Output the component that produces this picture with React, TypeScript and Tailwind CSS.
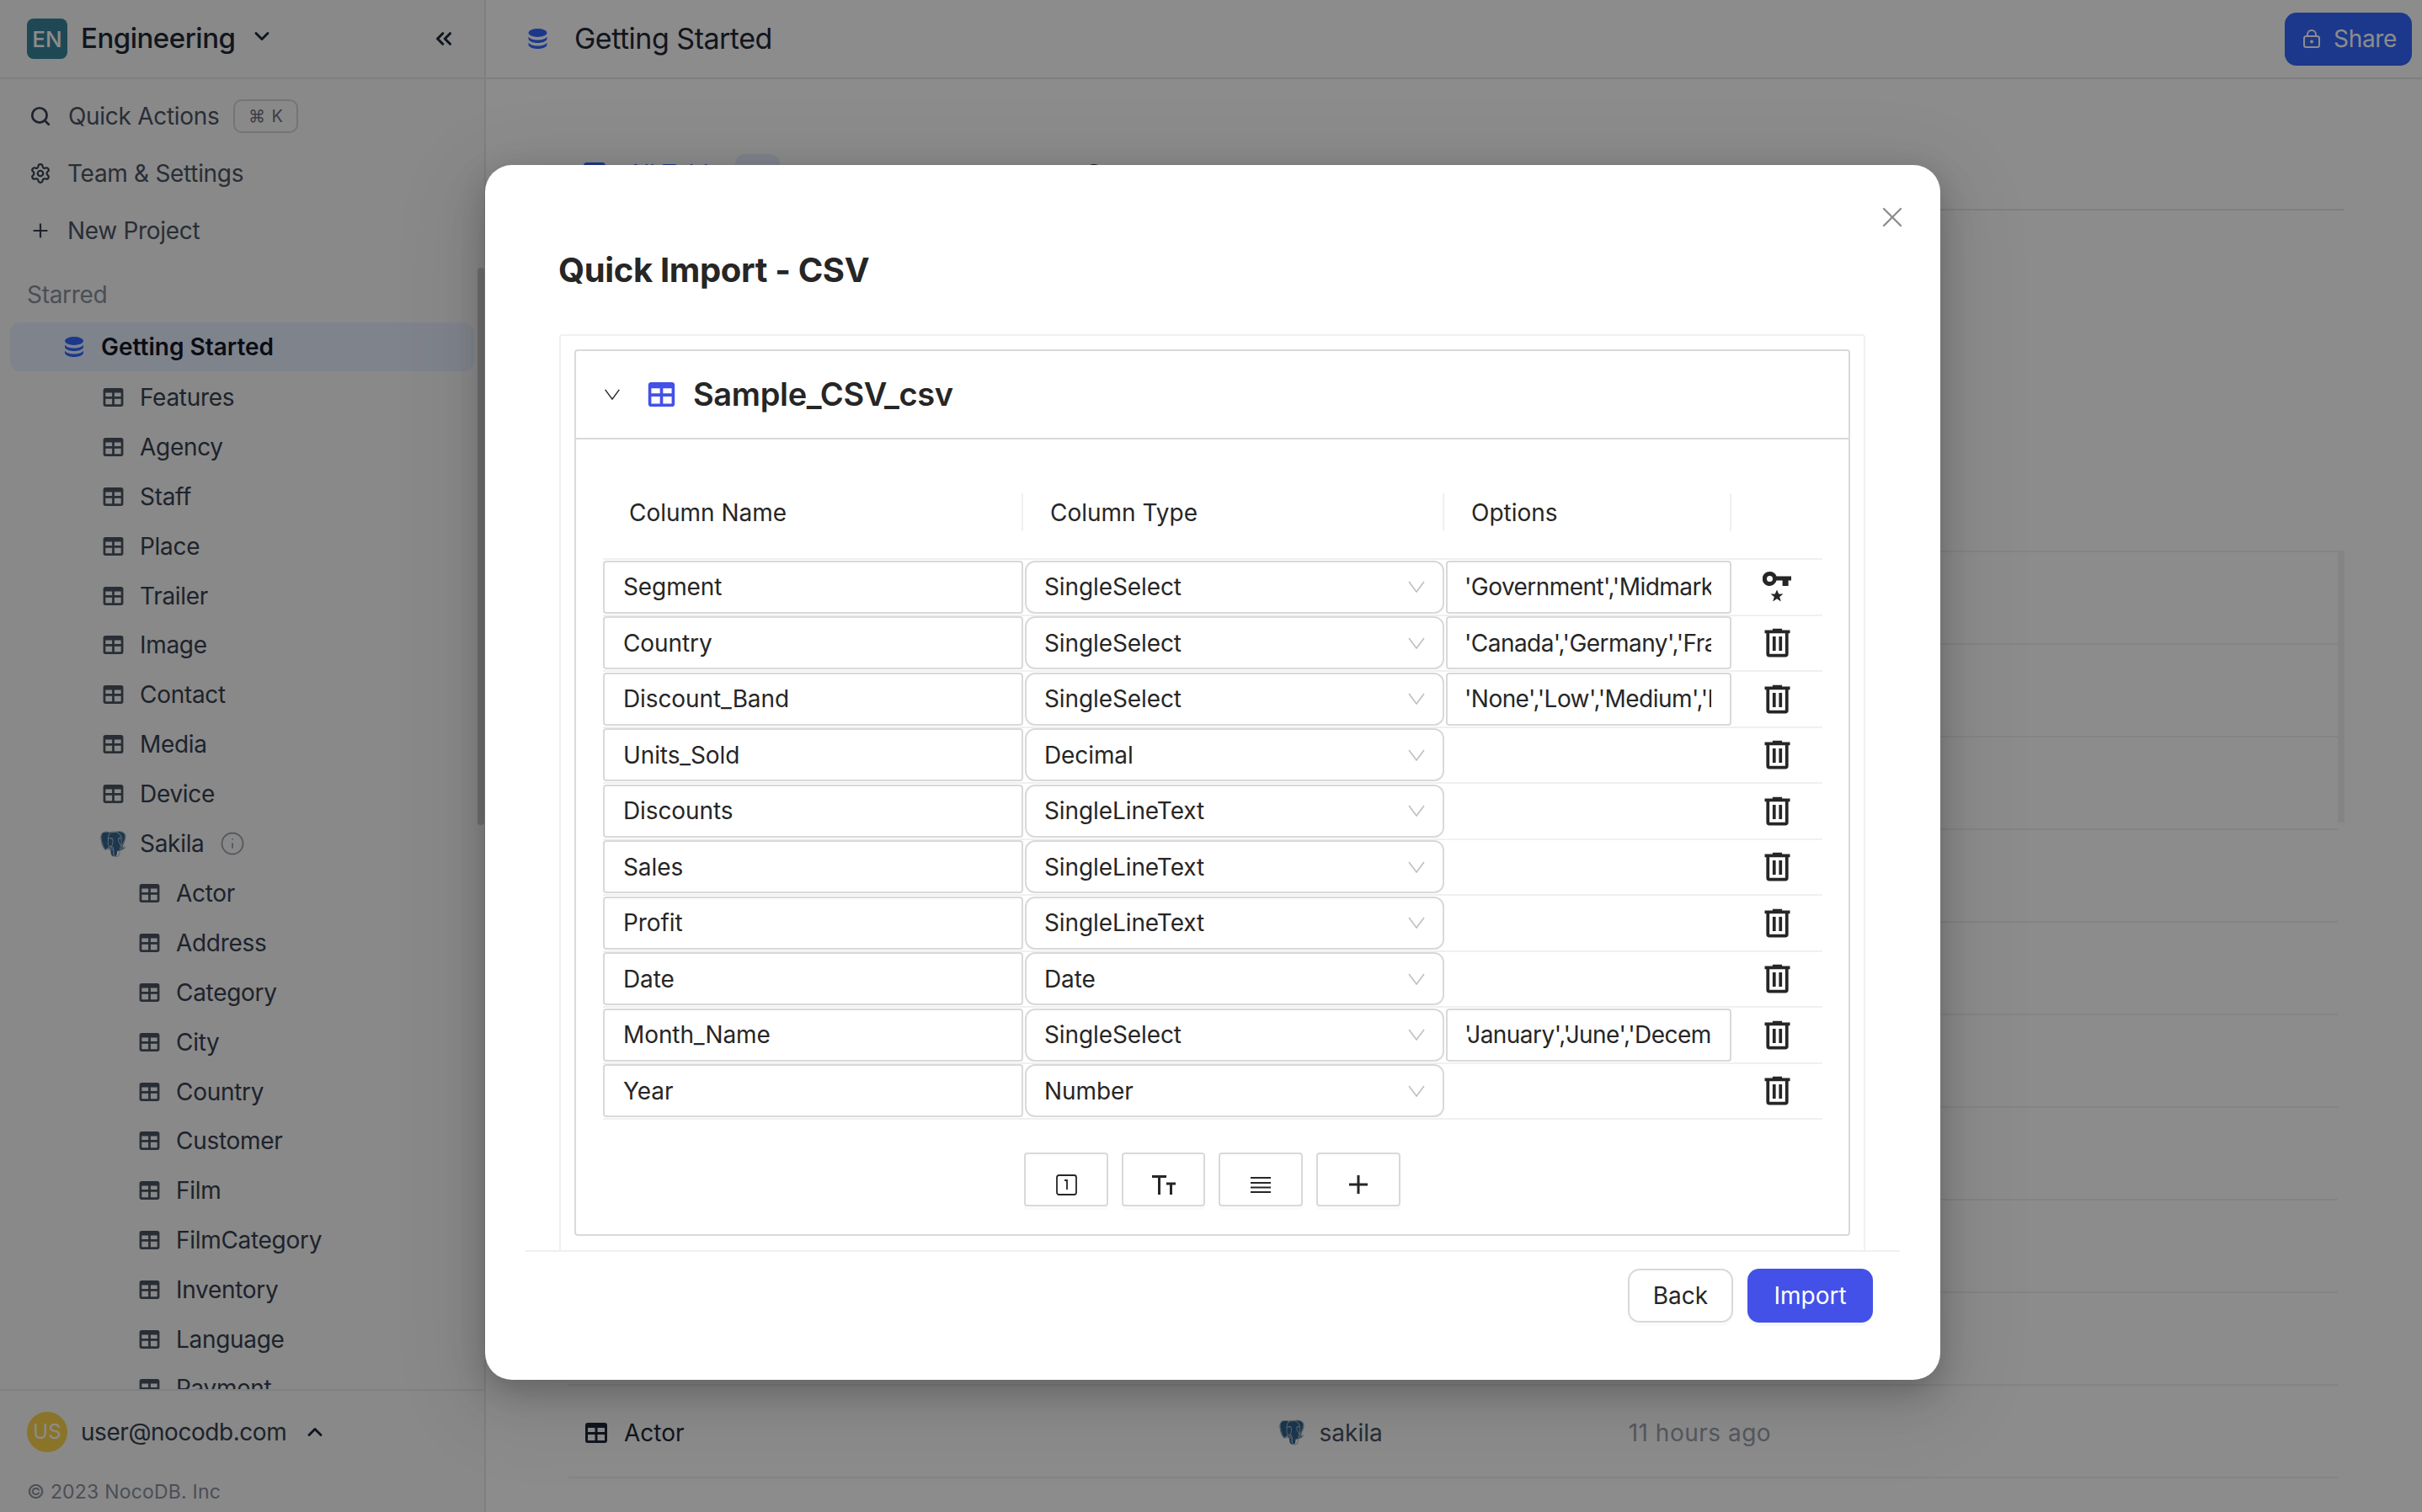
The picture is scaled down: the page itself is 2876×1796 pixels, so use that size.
import React from 'react';
import { Search, Settings, Plus, ChevronDown, ChevronUp, ChevronsLeft, Info, X } from 'lucide-react';
import { SiPostgresql } from 'react-icons/si';

interface ColumnRow {
  name: string;
  type: string;
  options?: string;
}

const columns: ColumnRow[] = [
  { name: 'Segment', type: 'SingleSelect', options: "'Government','Midmarket','Channel Partners','Enterprise'" },
  { name: 'Country', type: 'SingleSelect', options: "'Canada','Germany','France','Mexico','United States'" },
  { name: 'Discount_Band', type: 'SingleSelect', options: "'None','Low','Medium','High'" },
  { name: 'Units_Sold', type: 'Decimal' },
  { name: 'Discounts', type: 'SingleLineText' },
  { name: 'Sales', type: 'SingleLineText' },
  { name: 'Profit', type: 'SingleLineText' },
  { name: 'Date', type: 'Date' },
  { name: 'Month_Name', type: 'SingleSelect', options: "'January','June','December','March','October'" },
  { name: 'Year', type: 'Number' },
];

const topTables = ['Features', 'Agency', 'Staff', 'Place', 'Trailer', 'Image', 'Contact', 'Media', 'Device'];
const sakilaTables = ['Actor', 'Address', 'Category', 'City', 'Country', 'Customer', 'Film', 'FilmCategory', 'Inventory', 'Language', 'Payment'];

function TableIcon({ className }: { className?: string }) {
  return (
    <svg viewBox="0 0 26 24" className={className} fill="currentColor">
      <path
        fillRule="evenodd"
        d="M3 0h20a3 3 0 0 1 3 3v18a3 3 0 0 1-3 3H3a3 3 0 0 1-3-3V3a3 3 0 0 1 3-3zM3 6v5h8.5V6zM14.500 6v5H23V6zM3 14v7h8.500v-7zM14.500 14v7H23v-7z"
      />
    </svg>
  );
}

function DbIcon({ className }: { className?: string }) {
  return (
    <svg viewBox="0 0 24 24" className={className} fill="currentColor">
      <ellipse cx="12" cy="5" rx="11" ry="5" />
      <path d="M1 9.500c1.500 2.700 6 4 11 4s9.500-1.300 11-4V12c0 2.800-5 5-11 5S1 14.800 1 12z" />
      <path d="M1 16.500c1.500 2.700 6 4 11 4s9.500-1.300 11-4V19c0 2.800-5 5-11 5S1 21.800 1 19z" />
    </svg>
  );
}

// filled silhouette under the outline glyph
function PgIcon({ className }: { className?: string }) {
  return (
    <div className={`relative shrink-0 ${className ?? ''}`}>
      <svg viewBox="0 0 24 24" className="w-full h-full text-[#336791]" fill="currentColor">
        <path d="M6 1C3 .5.500 2 .500 6c0 4 1.500 9 3.500 11 1.500 1 2.500 0 3.500-1.500 1 1 1.500 1.500 2 2.500l.5 3c.5 2.500 3 3 4.500 2 1-1 1-3 1-4.500 1.500 0 3.500-.5 5.500-1.500 2-1 1-2-.5-2 1-3 3-7 3-9.500C23.500 2 20 .5 17 .5c-2 0-3.500.3-5 1-2-.8-4-.3-6-.5z" />
      </svg>
      <SiPostgresql className="absolute inset-0 w-full h-full text-[#b4bfca]" />
    </div>
  );
}

function VIcon({ className }: { className?: string }) {
  return (
    <svg viewBox="0 0 20 14" className={className} fill="none" stroke="currentColor" strokeWidth={1.6}>
      <path d="M1 1l9 12 9-12" />
    </svg>
  );
}

function TrashIcon() {
  return (
    <svg viewBox="0 0 24 24" className="w-[45px] h-[45px] text-[#262626]" fill="currentColor">
      <path d="M9,3V4H4V6H5V19A2,2 0 0,0 7,21H17A2,2 0 0,0 19,19V6H20V4H15V3H9M7,6H17V19H7V6M9,8V17H11V8H9M13,8V17H15V8H13Z" />
    </svg>
  );
}

function KeyStarIcon() {
  return (
    <svg viewBox="0 0 34 36" className="w-[34px] h-[36px] text-[#262626]" fill="currentColor">
      <path
        fillRule="evenodd"
        d="M8.500 0a8.500 8.500 0 0 1 8 5.500H34v5h-3.400V17h-7v-6.500h-7.100A8.500 8.500 0 1 1 8.500 0zm0 5a3.500 3.500 0 1 0 0 7 3.500 3.500 0 0 0 0-7z"
      />
      <path d="M17 21.500l2.200 5h5.300l-4.300 3.400 1.600 5.600-4.800-3.200-4.800 3.200 1.600-5.600-4.300-3.400h5.300z" />
    </svg>
  );
}

function SidebarRow({ label, indent }: { label: string; indent: 'one' | 'two' }) {
  return (
    <div className={`flex items-center h-[58.8px] shrink-0 ${indent === 'one' ? 'pl-[122px]' : 'pl-[165px]'}`}>
      <TableIcon className="w-[25px] h-[22px] text-[#4b5563] shrink-0" />
      <span className="ml-[19px] text-[28px] tracking-[-0.3px] text-[#374151]">{label}</span>
    </div>
  );
}

function Sidebar() {
  return (
    <aside className="relative w-[577px] h-full shrink-0 flex flex-col bg-[#f9f9fa] border-r-2 border-[#e5e7eb]">
      <div className="h-[94px] shrink-0 flex items-center pl-[32px] border-b-2 border-[#e5e7eb]">
        <div className="w-[48px] h-[48px] rounded-[8px] bg-[#38869a] flex items-center justify-center text-white text-[26px] font-medium">EN</div>
        <span className="ml-[16px] text-[33px] font-medium tracking-[-0.5px] text-[#1f2937]">Engineering</span>
        <ChevronDown className="ml-[18px] w-[28px] h-[28px] text-[#1f2937] -mt-[6px]" strokeWidth={2.5} />
        <ChevronsLeft className="ml-[187px] w-[30px] h-[30px] text-[#1f2937]" strokeWidth={2.5} />
      </div>
      <div className="flex-1 min-h-0 overflow-hidden pt-[10px] flex flex-col">
        <div className="h-[68px] shrink-0 flex items-center pl-[35px] text-[28px] tracking-[-0.3px] text-[#4b5563]">
          <Search className="w-[26px] h-[26px] text-[#374151]" strokeWidth={2.5} />
          <span className="ml-[20px]">Quick Actions</span>
          <span className="ml-[17px] w-[77px] h-[40px] rounded-[10px] border-2 border-[#d1d5db] flex items-center justify-center text-[20px] tracking-[1px] text-[#6b7280]">⌘ K</span>
        </div>
        <div className="h-[68px] shrink-0 flex items-center pl-[35px] text-[28px] tracking-[-0.3px] text-[#4b5563]">
          <Settings className="w-[26px] h-[26px] text-[#374151]" strokeWidth={2} />
          <span className="ml-[19px]">Team &amp; Settings</span>
        </div>
        <div className="h-[68px] shrink-0 flex items-center pl-[35px] text-[28px] tracking-[-0.3px] text-[#4b5563]">
          <Plus className="w-[26px] h-[26px] text-[#374151]" strokeWidth={2} />
          <span className="ml-[19px]">New Project</span>
        </div>
        <div className="h-[75px] shrink-0 pt-[8px] flex items-center pl-[32px] text-[28px] tracking-[-0.3px] text-[#8a8f9c]">Starred</div>
        <div className="h-[58px] mb-[2px] mx-[12px] shrink-0 rounded-[12px] bg-[#e7eeff] flex items-center pl-[64px]">
          <DbIcon className="w-[24px] h-[26px] text-[#3366ff]" />
          <span className="ml-[20px] text-[28px] font-semibold text-[#111827]">Getting Started</span>
        </div>
        {topTables.map((t) => (
          <SidebarRow key={t} label={t} indent="one" />
        ))}
        <div className="flex items-center h-[59.8px] shrink-0 pl-[119px]">
          <PgIcon className="w-[31px] h-[31px]" />
          <span className="ml-[16px] text-[28px] tracking-[-0.3px] text-[#374151]">Sakila</span>
          <Info className="ml-[18px] w-[30px] h-[30px] text-[#9ca3af]" strokeWidth={1.5} />
        </div>
        {sakilaTables.map((t) => (
          <SidebarRow key={t} label={t} indent="two" />
        ))}
      </div>
      <div className="h-[146px] shrink-0 border-t-2 border-[#e5e7eb] pl-[32px] pt-[24px]">
        <div className="flex items-center h-[50px]">
          <div className="w-[48px] h-[48px] rounded-full bg-[#fcd34d] flex items-center justify-center text-white text-[24px]">US</div>
          <span className="ml-[16px] text-[28px] tracking-[-0.45px] text-[#374151]">user@nocodb.com</span>
          <ChevronUp className="ml-[20px] w-[28px] h-[28px] text-[#1f2937]" strokeWidth={2.5} />
        </div>
        <div className="mt-[29px] text-[23px] tracking-[0.2px] text-[#8a8f9c]">© 2023 NocoDB. Inc</div>
      </div>
      <div className="absolute top-[318px] right-0 w-[8px] h-[662px] rounded-full bg-[#cfcfd3]" />
    </aside>
  );
}

function MainArea() {
  return (
    <main className="relative flex-1 min-w-0 h-full bg-white flex flex-col">
      <div className="h-[94px] shrink-0 flex items-center justify-between pl-[49px] pr-[12px] border-b-2 border-[#e5e7eb]">
        <div className="flex items-center">
          <DbIcon className="w-[25px] h-[24px] text-[#3366ff]" />
          <span className="ml-[31px] -mt-[1px] text-[34px] tracking-[-0.5px] text-[#1f2937]">Getting Started</span>
        </div>
        <div className="w-[151px] h-[63px] rounded-[14px] bg-[#3366ff] flex items-center pl-[22px] text-white text-[28px]">
          <svg viewBox="0 0 20 22" className="w-[20px] h-[22px]" fill="none" stroke="currentColor" strokeWidth={2}>
            <rect x="1" y="8" width="18" height="13" rx="2.500" />
            <path d="M5 8V6a5 5 0 0 1 10 0v2" />
            <circle cx="10" cy="14.500" r="1" fill="currentColor" />
          </svg>
          <span className="ml-[16px] tracking-[-0.3px]">Share</span>
        </div>
      </div>
      <div className="pl-[98px] pr-[92px] flex flex-col">
        <div className="h-[156px] shrink-0 border-b-2 border-[#e5e7eb] flex items-start pt-[99px] text-[28px] leading-[34px] text-[#374151] pl-[18px]">
          <div className="w-[26px] h-[26px] rounded-[4px] border-[3px] border-[#3366ff] shrink-0" />
          <span className="ml-[26px] -mt-[4px] w-[128px] whitespace-nowrap overflow-hidden text-[#3366ff]">All Tables</span>
          <span className="-mt-[10px] w-[53px] h-[40px] rounded-[12px] bg-[#e7eeff] shrink-0" />
          <span className="ml-[102px] mt-[3px] w-[16px] h-[26px] rounded-full bg-[#1f2937] shrink-0" />
          <span className="ml-[20px] -mt-[2px] w-[223px] whitespace-nowrap">Team &amp; Auth</span>
          <span className="mt-[2px] w-[24px] h-[24px] rounded-full border-[3px] border-[#1f2937] shrink-0" />
          <span className="ml-[23px] -mt-[1px] whitespace-nowrap">Data Sources</span>
        </div>
        <div className="h-[406px] shrink-0 border-b-2 border-[#f0f0f0]" />
        <div className="pr-[8px]">
          {Array.from({ length: 9 }).map((_, i) => (
            <div key={i} className="h-[110px] border-b-2 border-[#f0f0f0]" />
          ))}
          <div className="h-[110px] border-b-2 border-[#f0f0f0] flex items-center text-[28px] pl-[20px] pt-[3px]">
            <TableIcon className="w-[26px] h-[24px] text-[#1f2937] shrink-0" />
            <span className="ml-[20px] text-[#1f2937]">Actor</span>
            <PgIcon className="ml-[706px] w-[30px] h-[31px]" />
            <span className="ml-[18px] text-[#4b5563]">sakila</span>
            <span className="ml-[292px] text-[#9ca3af] tracking-[0.5px]">11 hours ago</span>
          </div>
        </div>
      </div>
      <div className="absolute top-[656px] right-[92px] w-[8px] h-[321px] bg-[#f0f0f0]" />
    </main>
  );
}

function ColumnRowItem({ row, index }: { row: ColumnRow; index: number }) {
  return (
    <div className="flex items-center h-[66.5px] border-b-2 border-[#f0f0f0] text-[28px] tracking-[-0.1px] text-[#262626]">
      <div className="w-[499px] h-[63px] mr-[2px] border-2 border-[#d9d9d9] rounded-[4px] flex items-center pl-[22px] shrink-0">{row.name}</div>
      <div className="w-[498px] h-[63px] mr-[2px] border-2 border-[#d9d9d9] rounded-[12px] flex items-center justify-between pl-[21px] pr-[21px] shrink-0">
        <span>{row.type}</span>
        <VIcon className="w-[20px] h-[14px] text-[#bfbfbf]" />
      </div>
      {row.options ? (
        <div className="w-[339px] h-[63px] border-2 border-[#d9d9d9] rounded-[4px] pl-[20px] pr-[22px] shrink-0 flex items-center">
          <span className="block overflow-hidden whitespace-nowrap tracking-[-0.55px]">{row.options}</span>
        </div>
      ) : (
        <div className="w-[339px] shrink-0" />
      )}
      <div className="flex-1 flex justify-center">{index === 0 ? <KeyStarIcon /> : <TrashIcon />}</div>
    </div>
  );
}

function AddButton({ width, children }: { width: string; children: React.ReactNode }) {
  return (
    <div className={`${width} h-[64px] pt-[12px] border-2 border-[#d9d9d9] rounded-[4px] flex items-center justify-center shadow-[0_4px_0_rgba(0,0,0,0.015)] text-[#262626]`}>
      {children}
    </div>
  );
}

function ImportModal() {
  return (
    <div className="absolute inset-0 bg-black/45 flex justify-center items-start pt-[196px] pl-[4px]">
      <div className="relative w-[1728px] h-[1443px] bg-white rounded-[32px] shadow-[0_12px_32px_rgba(0,0,0,0.16),0_18px_56px_rgba(0,0,0,0.1),0_24px_96px_32px_rgba(0,0,0,0.06)]">
        <X className="absolute top-[42px] right-[37px] w-[40px] h-[40px] text-[#8c8c8c]" strokeWidth={1.35} />
        <div className="pt-[100px] pl-[87px] h-[201px]">
          <h1 className="text-[40px] leading-[50px] font-bold tracking-[-0.35px] text-[#262626]">Quick Import - CSV</h1>
        </div>
        <div className="ml-[88px] w-[1551px] h-[1088px] border-2 border-b-0 border-[#f0f0f0] rounded-t-[4px] pl-[16px] pt-[16px]">
          <div className="w-[1515px] h-[1053px] border-2 border-[#d9d9d9] rounded-[4px]">
            <div className="h-[105px] border-b-2 border-[#d9d9d9] flex items-center pl-[33px]">
              <VIcon className="w-[20px] h-[13px] text-[#262626]" />
              <TableIcon className="ml-[32px] w-[33px] h-[29px] text-[#4351e8]" />
              <span className="ml-[21px] text-[38px] font-semibold tracking-[-0.35px] text-[#262626]">Sample_CSV_csv</span>
            </div>
            <div className="pl-[32px] pr-[31px] pt-[64px]">
              <div className="flex h-[45px] items-center text-[28px] text-[#262626] mb-[32px]">
                <div className="w-[499px] h-full pl-[31px] flex items-center border-r-2 border-[#f0f0f0] shrink-0">Column Name</div>
                <div className="w-[500px] h-full pl-[32px] flex items-center border-r-2 border-[#f0f0f0] shrink-0">Column Type</div>
                <div className="w-[341px] h-full pl-[32px] flex items-center border-r-2 border-[#f0f0f0] shrink-0">Options</div>
              </div>
              <div className="border-t-2 border-[#f0f0f0]">
                {columns.map((row, i) => (
                  <ColumnRowItem key={row.name} row={row} index={i} />
                ))}
              </div>
              <div className="flex gap-[16px] ml-[500px] mt-[39px]">
                <AddButton width="w-[100px]">
                  <svg viewBox="0 0 25 25" className="w-[25px] h-[25px]" fill="none" stroke="currentColor" strokeWidth={1.8}>
                    <rect x="1" y="1" width="23" height="23" rx="2.500" />
                    <path d="M10 7h3v11" />
                  </svg>
                </AddButton>
                <AddButton width="w-[99px]">
                  <svg viewBox="0 0 28 23" className="w-[28px] h-[23px]" fill="none" stroke="currentColor" strokeWidth={3}>
                    <path d="M0 1.500h17M8.500 1.500V23M17 10h11M22.500 10v13" />
                  </svg>
                </AddButton>
                <AddButton width="w-[100px]">
                  <svg viewBox="0 0 24 19" className="w-[24px] h-[19px]" fill="none" stroke="currentColor" strokeWidth={2}>
                    <path d="M0 1h24M0 7h24M0 12.500h24M0 18h24" />
                  </svg>
                </AddButton>
                <AddButton width="w-[100px]">
                  <svg viewBox="0 0 22 22" className="w-[22px] h-[22px]" fill="none" stroke="currentColor" strokeWidth={3}>
                    <path d="M0 11h22M11 0v22" />
                  </svg>
                </AddButton>
              </div>
            </div>
          </div>
        </div>
        <div className="mx-[48px] border-t-2 border-[#f0f0f0] pt-[20px] pr-[32px] flex justify-end gap-[17px]">
          <button className="w-[125px] h-[64px] rounded-[14px] border-2 border-[#d9d9d9] bg-white text-[28px] text-[#262626] shadow-[0_4px_0_rgba(0,0,0,0.015)]">Back</button>
          <button className="w-[149px] h-[64px] rounded-[14px] bg-[#4351e8] text-[28px] text-white shadow-[0_4px_0_rgba(0,0,0,0.03)]">Import</button>
        </div>
      </div>
    </div>
  );
}

export default function App() {
  return (
    <div className="relative w-[2876px] h-[1796px] overflow-hidden flex bg-white font-['Inter',sans-serif]">
      <Sidebar />
      <MainArea />
      <ImportModal />
    </div>
  );
}
